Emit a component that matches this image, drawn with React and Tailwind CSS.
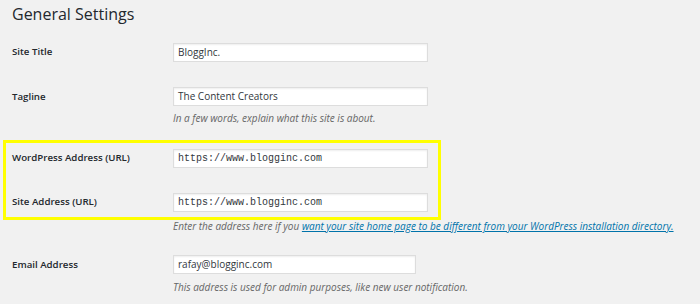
export default function App() {
  const font = { fontFamily: '"Open Sans", "Noto Sans", Arial, sans-serif' };
  const inputBase =
    "h-[19px] border border-[#dddddd] bg-white shadow-[inset_0_1px_2px_rgba(0,0,0,0.07)] pl-[4px] flex items-center text-[10px] text-[#32373c]";
  const inputCls = inputBase + " w-[255px]";
  const mono = "font-['Liberation_Mono',monospace] text-[9.4px]";
  const labelCls = "w-[161px] shrink-0 text-[9.7px] font-semibold text-[#23282d]";
  const descCls = "italic text-[10px] text-[#666666] leading-[12px]";
  return (
    <div className="w-[700px] h-[304px] bg-[#f1f1f1] overflow-hidden" style={font}>
      <div className="pl-[12px]">
        <h1 className="text-[16px] text-[#23282d] leading-[22px] pt-[3px] font-normal">General Settings</h1>

        <div className="flex items-center mt-[18px]">
          <div className={labelCls}>Site Title</div>
          <div className={inputCls}>BloggInc.</div>
        </div>

        <div className="flex items-start mt-[25px]">
          <div className={labelCls + " leading-[19px]"}>Tagline</div>
          <div className="flex flex-col">
            <div className={inputCls}>The Content Creators</div>
            <div className={descCls + " mt-[6px]"}>In a few words, explain what this site is about.</div>
          </div>
        </div>

        <div className="-ml-[9px] mt-[16px] w-[438px] border-[3px] border-[#ffff00] pl-[6px] pt-[6px] pb-[5px]">
          <div className="flex items-center">
            <div className={labelCls}>WordPress Address (URL)</div>
            <div className={inputCls + " " + mono}>https://www.blogginc.com</div>
          </div>
          <div className="flex items-center mt-[25px]">
            <div className={labelCls}>Site Address (URL)</div>
            <div className={inputCls + " " + mono}>https://www.blogginc.com</div>
          </div>
        </div>

        <div className={descCls + " ml-[161px] mt-[0px]"}>
          Enter the address here if you{" "}
          <a className="text-[#0073aa] underline" href="#">
            want your site home page to be different from your WordPress installation directory.
          </a>
        </div>

        <div className="flex items-start mt-[23px]">
          <div className={labelCls + " leading-[19px]"}>Email Address</div>
          <div className="flex flex-col">
            <div className={inputBase + " w-[243px]"}>rafay@blogginc.com</div>
            <div className={descCls + " mt-[7px]"}>This address is used for admin purposes, like new user notification.</div>
          </div>
        </div>
      </div>
    </div>
  );
}
